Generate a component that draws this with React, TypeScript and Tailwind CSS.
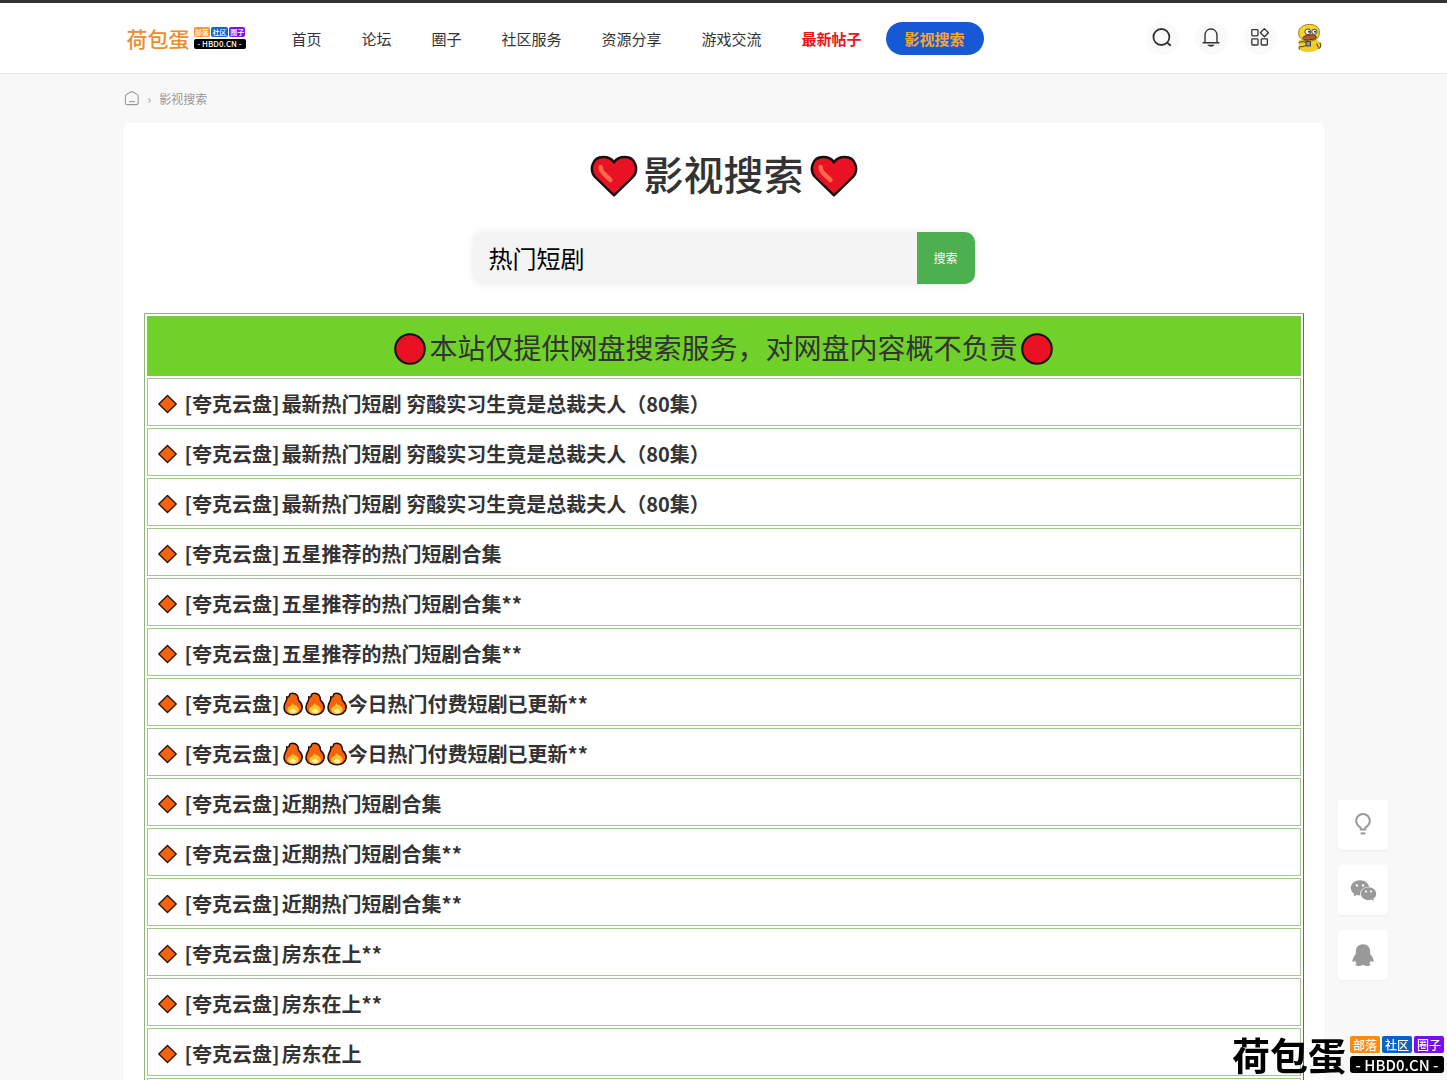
import { AiFillWechat } from 'react-icons/ai';

type NavItem = {
  label: string;
  href: string;
};

const navItems: NavItem[] = [
  { label: '首页', href: '#home' },
  { label: '论坛', href: '#forum' },
  { label: '圈子', href: '#circle' },
  { label: '社区服务', href: '#service' },
  { label: '资源分享', href: '#share' },
  { label: '游戏交流', href: '#game' },
];

type Result = {
  id: number;
  title: string;
  fires?: number;
};

const results: Result[] = [
  { id: 1, title: '最新热门短剧 穷酸实习生竟是总裁夫人（80集）' },
  { id: 2, title: '最新热门短剧 穷酸实习生竟是总裁夫人（80集）' },
  { id: 3, title: '最新热门短剧 穷酸实习生竟是总裁夫人（80集）' },
  { id: 4, title: '五星推荐的热门短剧合集' },
  { id: 5, title: '五星推荐的热门短剧合集**' },
  { id: 6, title: '五星推荐的热门短剧合集**' },
  { id: 7, title: '今日热门付费短剧已更新**', fires: 3 },
  { id: 8, title: '今日热门付费短剧已更新**', fires: 3 },
  { id: 9, title: '近期热门短剧合集' },
  { id: 10, title: '近期热门短剧合集**' },
  { id: 11, title: '近期热门短剧合集**' },
  { id: 12, title: '房东在上**' },
  { id: 13, title: '房东在上**' },
  { id: 14, title: '房东在上' },
];

const Heart = () => (
  <svg viewBox="0 0 48 42" className="w-12 h-[42px] mt-1.5" aria-hidden="true">
    <path
      d="M24 40.4 L5 22 C-1 15 2 2 13 2 C18 2 22 4 24 7.4 C26 4 30 2 35 2 C46 2 49 15 43 22 Z"
      fill="#e81224"
      stroke="#111"
      strokeWidth="2.4"
      strokeLinejoin="round"
    />
    <path d="M10.6 12 C10.6 18 16 20 20.4 25" fill="none" stroke="#ff6b4a" strokeWidth="4.4" strokeLinecap="round" />
  </svg>
);

const RedDot = () => (
  <svg viewBox="0 0 32 32" className="size-8 mt-1" aria-hidden="true">
    <circle cx="16" cy="16" r="14.8" fill="#e81224" stroke="#111" strokeWidth="2" />
  </svg>
);

const Diamond = () => (
  <svg viewBox="0 0 20 20" className="size-5 shrink-0" aria-hidden="true">
    <path d="M10.5 1.4 L19.2 10 L10.5 18.6 L1.8 10 Z" fill="#f7630c" stroke="#2a1408" strokeWidth="1.4" strokeLinejoin="round" />
  </svg>
);

const Fire = () => (
  <svg viewBox="0 0 22 24" className="w-[22px] h-6" aria-hidden="true">
    <path
      d="M8.4 1.6 C11.6 0.6 15 2 16 5 C16.4 6.6 16 7.4 16.8 8.6 C19 10.6 20.4 12.8 20.2 15.6 C19.8 20.2 15.8 22.8 11.2 22.8 C6 22.8 2 20.2 2 15.2 C2 12.2 3.2 10.6 4.2 8.8 C5.2 7 4.6 6 4.8 4.8 C6 5.4 6.6 5 7 4.4 C7.4 3.6 7.4 2.4 8.4 1.6 Z"
      fill="#f7630c"
      stroke="#1a0d06"
      strokeWidth="1.5"
      strokeLinejoin="round"
    />
    <path d="M5.4 16.4 C5.8 14.6 7.6 15.4 8.8 13.8 C9.6 12.8 9.8 12 10.4 11.2 C11.4 13 12.6 12.6 13.6 13.6 C15.4 14.8 17 16 16.8 18.2 C16.4 20.8 13.8 21.9 11 21.9 C8 21.9 4.6 20 5.4 16.4 Z" fill="#ffc02e" />
    <path d="M7.6 18.6 C8.8 17.4 10.4 18 11 16.4 C12.4 17.6 14.6 18 14.4 19.8 C13.6 21.8 8.4 21.8 7.6 18.6 Z" fill="#fff3a0" />
  </svg>
);

const SearchIcon = () => (
  <svg viewBox="0 0 22 22" className="size-[22px]" fill="none" stroke="#333" strokeWidth="1.8" aria-hidden="true">
    <circle cx="10.4" cy="10" r="8" />
    <path d="M16 15.6 L19.8 18.8" strokeWidth="2" />
  </svg>
);

const BellIcon = () => (
  <svg viewBox="0 0 22 22" className="size-[22px]" fill="none" stroke="#333" strokeWidth="1.4" aria-hidden="true">
    <path d="M5 15.6 V8.4 C5 4.8 7.4 2 11 2 C14.6 2 17 4.8 17 8.4 V15.6 M2.6 15.8 H19.4" />
    <path d="M7.8 18 C9.4 19.8 12.6 19.8 14.2 18 Z" fill="#333" strokeWidth="0.6" />
  </svg>
);

const AppsIcon = () => (
  <svg viewBox="0 0 22 22" className="size-[22px]" fill="none" stroke="#333" strokeWidth="1.3" aria-hidden="true">
    <rect x="2.8" y="2.6" width="6.2" height="6.2" rx="0.8" />
    <rect x="2.8" y="11.8" width="6.2" height="6.2" rx="0.8" />
    <rect x="12.2" y="11.8" width="6.2" height="6.2" rx="0.8" />
    <path d="M15.4 1.6 L19.4 5.8 L15.4 9.8 L11.4 5.8 Z" strokeLinejoin="round" />
  </svg>
);

const BulbIcon = () => (
  <svg viewBox="0 0 26 26" className="size-[26px]" fill="none" stroke="#999" strokeWidth="2" aria-hidden="true">
    <path d="M10.6 17.4 V15.6 C8 14 6.2 12 6.2 8.8 C6.2 5 9.2 2 13 2 C16.8 2 19.8 5 19.8 8.8 C19.8 12 18 14 15.4 15.6 V17.4 Z" strokeLinejoin="round" />
    <path d="M10.6 21.4 H15.4" />
  </svg>
);

const QqIcon = () => (
  <svg viewBox="0 0 24 24" className="size-6" fill="#999" aria-hidden="true">
    <path d="M12 1.2 C7.6 1.2 4.8 4.4 4.8 8.6 V11 C3 13.2 1.2 16.4 1.4 18.6 C1.6 19.6 2.6 19 4 17.4 C4.4 18.8 5 19.8 5.8 20.4 C4.4 21 4.2 22 5 22.6 C6.6 23.4 10.2 23.2 12 21.8 C13.8 23.2 17.4 23.4 19 22.6 C19.8 22 19.6 21 18.2 20.4 C19 19.8 19.6 18.8 20 17.4 C21.4 19 22.4 19.6 22.6 18.6 C22.8 16.4 21 13.2 19.2 11 V8.6 C19.2 4.4 16.4 1.2 12 1.2 Z" />
  </svg>
);

const Avatar = () => (
  <svg viewBox="0 0 30 32" className="w-[30px] h-8" aria-hidden="true">
    <path d="M5 18 C4.4 21 4.6 25 6 28 C9 30.4 19 30.6 23.6 28 L24.4 26.4 C27 26 27.4 23 26 21 C25 19 23.6 18 21 17 Z" fill="#f3cc2a" />
    <path d="M5 24.6 L5.4 27.6 M24.2 26.6 C27.4 26 27.2 22.4 25.8 20.6 M22.6 21.4 L24.4 25.4" stroke="#5a4a12" strokeWidth="1.1" fill="none" />
    <path d="M15.4 2.4 C22 2.2 25.8 6 25.4 11 C25.2 16.4 21 19 15 19 C9 19 4.4 16.6 4.6 10.6 C4.8 5.6 9.2 2.6 15.4 2.4 Z" fill="#f7d52c" stroke="#7a671c" strokeWidth="0.8" />
    <circle cx="13.8" cy="9.8" r="2.9" fill="#fff" stroke="#333" strokeWidth="0.9" />
    <circle cx="20.4" cy="9.8" r="2.6" fill="#fff" stroke="#333" strokeWidth="0.9" />
    <circle cx="15" cy="9.8" r="1" fill="#222" />
    <circle cx="21" cy="9.8" r="1" fill="#222" />
    <path d="M9 15.4 C10 13.4 13 14 15.4 13 C18 12.4 22 13 22.4 15 C22 17.8 18.6 17 16 17.6 C13 18.4 9 18.4 9 15.4 Z" fill="#b55a35" stroke="#4a2412" strokeWidth="0.9" />
    <rect x="12" y="19.4" width="4.4" height="4.6" fill="#8f97a0" stroke="#333" strokeWidth="0.9" />
    <path d="M4.6 20.6 C7 19.6 9 19.4 11.6 20.4 M5.6 24.6 C8 25 10 24.4 11.6 23.4" stroke="#4a3c10" strokeWidth="1" fill="none" />
  </svg>
);

const HomeIcon = () => (
  <svg viewBox="0 0 16 16" className="size-4" fill="none" stroke="#999" strokeWidth="1.1" aria-hidden="true">
    <path d="M1.4 5.4 C1.4 4.6 1.8 4 2.6 3.4 L6.6 1 C7.6 0.4 8 0.4 9 1 L13 3.4 C13.8 4 14.2 4.6 14.2 5.4 V11.6 C14.2 13 13.6 13.6 12.2 13.6 H3.4 C2 13.6 1.4 13 1.4 11.6 Z" />
    <path d="M5 10.6 H10.8" />
  </svg>
);

const Logo = () => (
  <a href="#home" className="flex items-center gap-1 ml-[3px]">
    <span className="text-[21px] leading-6 font-medium text-[#ee8d2b]">荷包蛋</span>
    <span className="flex flex-col gap-[2px] w-[52px] text-white text-center font-medium">
      <span className="grid grid-cols-3 gap-px text-[7px] leading-[10px]">
        <span className="rounded-[2px] bg-[#f5962f]">部落</span>
        <span className="rounded-[2px] bg-[#1565c0]">社区</span>
        <span className="rounded-[2px] bg-[#7c12ee]">圈子</span>
      </span>
      <span className="rounded-[2px] bg-black text-[8px] leading-[10px]">- HBD0.CN -</span>
    </span>
  </a>
);

const Watermark = () => (
  <div className="fixed right-[3px] bottom-[7px] flex items-center gap-1 font-bold pointer-events-none">
    <span className="text-[38px] leading-[38px] text-black">荷包蛋</span>
    <span className="flex flex-col gap-[3px] w-[94px] text-white text-center font-medium">
      <span className="grid grid-cols-3 gap-[2px] text-xs leading-[17px]">
        <span className="rounded-[2px] bg-[#ff8a0d]">部落</span>
        <span className="rounded-[2px] bg-[#0a62c4]">社区</span>
        <span className="rounded-[2px] bg-[#7a0cf5]">圈子</span>
      </span>
      <span className="rounded-[3px] bg-black text-[15px] leading-[17px]">- HBD0.CN -</span>
    </span>
  </div>
);

const Header = () => (
  <header className="bg-white border-t-3 border-t-[#333] border-b border-b-[#e8e8e8]">
    <div className="max-w-[1200px] mx-auto h-[70px] flex items-center">
      <Logo />
      <nav className="ml-[46px] pt-0.5 flex items-center gap-10 text-[15px] text-[#333]">
        {navItems.map(item => (
          <a key={item.label} href={item.href}>
            {item.label}
          </a>
        ))}
        <a href="#latest" className="font-bold text-[#e8151b]">
          最新帖子
        </a>
      </nav>
      <a
        href="#search"
        className="ml-6 h-[33px] px-[19px] pt-0.5 flex items-center rounded-full bg-[#1659d4] text-[15px] font-bold text-[#f5a536]"
      >
        影视搜索
      </a>
      <div className="ml-auto -mr-0.5 flex items-center gap-4">
        <button type="button" aria-label="搜索" className="size-[33px] rounded-full bg-[#fafafa] flex items-center justify-center">
          <SearchIcon />
        </button>
        <button type="button" aria-label="消息" className="size-[33px] rounded-full bg-[#fafafa] flex items-center justify-center">
          <BellIcon />
        </button>
        <button type="button" aria-label="应用" className="size-[33px] rounded-full bg-[#fafafa] flex items-center justify-center">
          <AppsIcon />
        </button>
        <button type="button" aria-label="个人中心" className="size-[33px] flex items-center justify-center">
          <Avatar />
        </button>
      </div>
    </div>
  </header>
);

const ResultTable = () => (
  <table className="w-full border border-[#8fb878] border-r-[#4f7a45] border-separate border-spacing-[2px]">
    <thead>
      <tr>
        <th className="h-[60px] p-0 pt-0.5 border border-[#7ccb48] bg-[#6fd12a] font-normal text-[28px] leading-10 text-[#333]">
          <div className="flex items-center justify-center gap-[3px]">
            <RedDot />
            <span>本站仅提供网盘搜索服务，对网盘内容概不负责</span>
            <RedDot />
          </div>
        </th>
      </tr>
    </thead>
    <tbody>
      {results.map(result => (
        <tr key={result.id}>
          <td className="h-12 p-0 px-[9px] pt-[3px] border border-[#a3c792]">
            <a href={`#result-${result.id}`} className="flex items-center text-[20px] leading-[30px] font-bold text-[#333]">
              <Diamond />
              <span className="ml-2 mr-0.5">[夸克云盘]</span>
              {Array.from({ length: result.fires ?? 0 }, (_, i) => (
                <Fire key={i} />
              ))}
              <span>{result.title}</span>
            </a>
          </td>
        </tr>
      ))}
      <tr>
        <td className="h-12 border border-[#a3c792]" />
      </tr>
    </tbody>
  </table>
);

const SideTools = () => (
  <aside className="fixed right-[59px] bottom-[100px] flex flex-col gap-[15px] text-[#999]">
    <button type="button" aria-label="提示" className="size-[50px] rounded-sm bg-white shadow-xs flex items-center justify-center">
      <BulbIcon />
    </button>
    <button type="button" aria-label="微信" className="size-[50px] rounded-sm bg-white shadow-xs flex items-center justify-center">
      <AiFillWechat size={29} />
    </button>
    <button type="button" aria-label="QQ" className="size-[50px] rounded-sm bg-white shadow-xs flex items-center justify-center">
      <QqIcon />
    </button>
  </aside>
);

export default function App() {
  return (
    <div className="h-screen overflow-hidden bg-[#f8f8f8] font-['Noto_Sans_CJK_SC',sans-serif] text-[#333]">
      <Header />
      <main className="max-w-[1200px] mx-auto">
        <div className="h-[49px] flex items-center text-xs text-[#999]">
          <a href="#home" aria-label="首页">
            <HomeIcon />
          </a>
          <span className="mx-2">›</span>
          <span>影视搜索</span>
        </div>
        <section className="px-5 pt-5 rounded-md bg-white">
          <h1 className="flex items-center justify-center gap-1.5 text-[40px] leading-[60px] font-medium">
            <Heart />
            影视搜索
            <Heart />
          </h1>
          <form className="mt-[29px] mb-[29px] mx-auto w-[502px] h-[52px] flex rounded-[10px] shadow-[0_0_8px_rgba(0,0,0,0.08)]">
            <input
              type="text"
              aria-label="搜索关键词"
              defaultValue="热门短剧"
              className="flex-1 min-w-0 px-4 rounded-l-[10px] bg-[#f4f4f4] text-[24px] text-black outline-none"
            />
            <button type="submit" className="w-[58px] rounded-r-[10px] bg-[#4caf50] text-xs text-white">
              搜索
            </button>
          </form>
          <ResultTable />
        </section>
      </main>
      <SideTools />
      <Watermark />
    </div>
  );
}
